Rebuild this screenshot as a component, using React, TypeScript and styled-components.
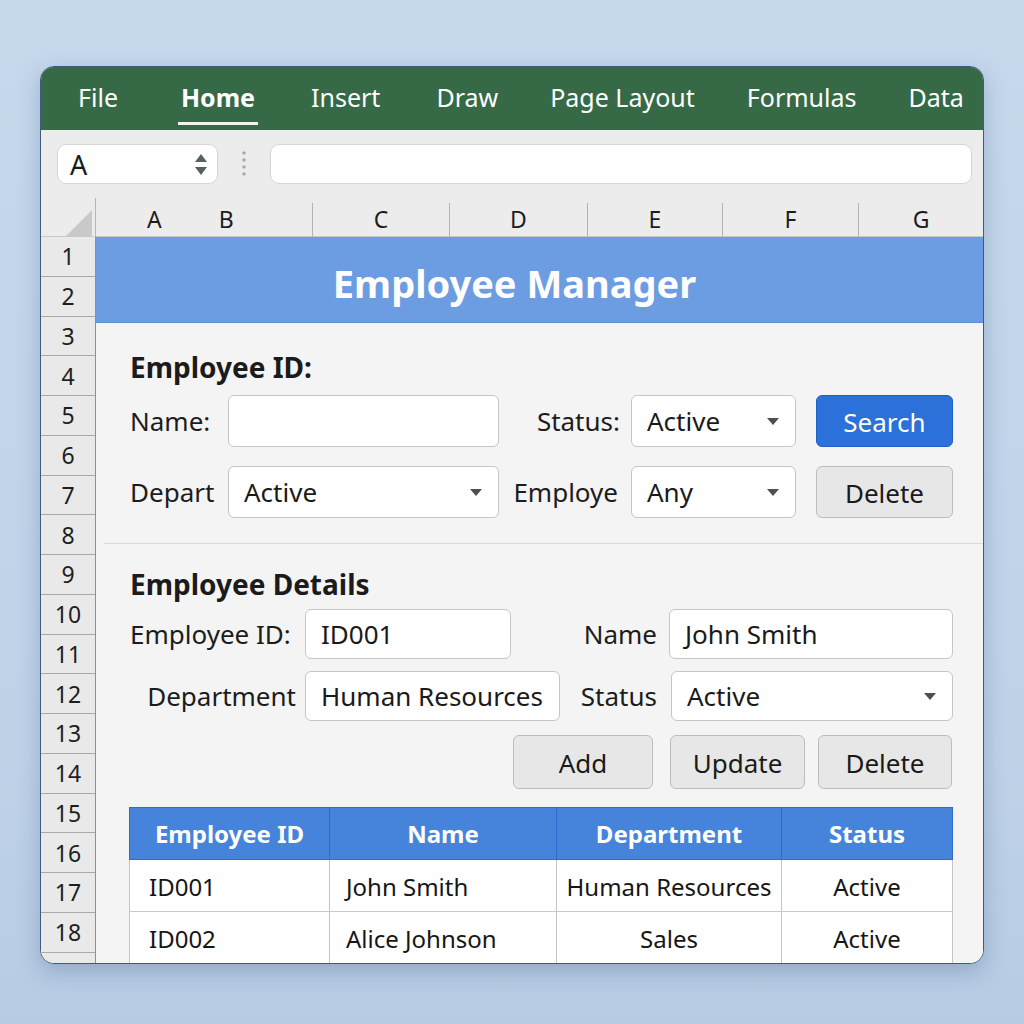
import styled, { createGlobalStyle } from "styled-components";

const GlobalStyle = createGlobalStyle`
  html, body {
    margin: 0;
    padding: 0;
  }
  body {
    font-family: "Noto Sans", "Open Sans", sans-serif;
    background: #c3d5e9;
  }
`;

const Page = styled.div`
  width: 1024px;
  height: 1024px;
  box-sizing: border-box;
  padding: 66px 40px 0 40px;
  background: linear-gradient(180deg, #c6d8ec 0%, #bfd2e8 70%, #b7cce3 100%);
`;

const Window = styled.div`
  width: 944px;
  height: 898px;
  box-sizing: border-box;
  border: 1px solid #3d5c7e;
  border-radius: 14px;
  overflow: hidden;
  display: flex;
  flex-direction: column;
  background: #f4f4f4;
  box-shadow: 0 8px 22px rgba(45, 80, 125, 0.28);
`;

const Ribbon = styled.div`
  height: 63px;
  flex-shrink: 0;
  background: #366a47;
  display: flex;
  align-items: stretch;
  padding-left: 37px;
`;

const Tab = styled.div<{ $active?: boolean; $ml: number }>`
  box-sizing: border-box;
  padding-top: 5px;
  margin-bottom: 5px;
  margin-left: ${(p) => p.$ml - (p.$active ? 3 : 0)}px;
  margin-right: ${(p) => (p.$active ? -3 : 0)}px;
  display: flex;
  align-items: center;
  color: #fff;
  font-size: 25px;
  font-weight: ${(p) => (p.$active ? 700 : 400)};
  border-bottom: 3px solid ${(p) => (p.$active ? "#f2f2f2" : "transparent")};
  padding-left: ${(p) => (p.$active ? "3px" : "0")};
  padding-right: ${(p) => (p.$active ? "3px" : "0")};
`;

const FormulaBar = styled.div`
  height: 68px;
  flex-shrink: 0;
  background: #ececec;
  display: flex;
  align-items: center;
  padding: 0 11px 0 16px;
`;

const NameBox = styled.div`
  width: 161px;
  height: 40px;
  box-sizing: border-box;
  background: #fff;
  border: 1px solid #d6d6d6;
  border-radius: 9px;
  display: flex;
  align-items: center;
  justify-content: space-between;
  padding: 0 10px 0 12px;
  font-size: 27px;
  color: #1a1a1a;
`;

const Spinner = styled.div`
  display: flex;
  flex-direction: column;
  gap: 5px;
`;

const Divider = styled.div`
  width: 52px;
  display: flex;
  justify-content: center;
`;

const FormulaInput = styled.div`
  flex: 1;
  height: 40px;
  box-sizing: border-box;
  background: #fff;
  border: 1px solid #d6d6d6;
  border-radius: 9px;
`;

const ColumnHeaders = styled.div`
  height: 38px;
  flex-shrink: 0;
  background: #ececec;
  display: grid;
  grid-template-columns: 55px 216px 137px 138px 135px 136px 1fr;
  border-bottom: 1px solid #c9c9c9;
`;

const CornerCell = styled.div`
  border-right: 1px solid #b5b5b5;
  display: flex;
  align-items: flex-end;
  justify-content: flex-end;
  padding: 0 3px 5px 0;
`;

const ColHead = styled.div<{ $first?: boolean }>`
  display: flex;
  align-items: center;
  justify-content: center;
  font-size: 23px;
  color: #1c1c1c;
  border-left: ${(p) => (p.$first ? "none" : "1px solid #b3b3b3")};
  margin-top: 5px;
  padding-bottom: 6px;
`;

const ABHead = styled(ColHead)`
  justify-content: flex-start;
  padding-left: 51px;
  gap: 57px;
`;

const Body = styled.div`
  flex: 1;
  display: flex;
  min-height: 0;
`;

const RowHeaders = styled.div`
  width: 55px;
  flex-shrink: 0;
  box-sizing: border-box;
  background: #e9e9e9;
  border-right: 1px solid #8f8f8f;
  display: flex;
  flex-direction: column;
`;

const RowNum = styled.div`
  height: 39.75px;
  flex-shrink: 0;
  box-sizing: border-box;
  border-bottom: 1px solid #a9a9a9;
  display: flex;
  align-items: center;
  justify-content: center;
  font-size: 23px;
  color: #1e1e1e;
`;

const Sheet = styled.div`
  flex: 1;
  display: flex;
  flex-direction: column;
  min-width: 0;
`;

const Banner = styled.div`
  height: 86px;
  flex-shrink: 0;
  box-sizing: border-box;
  background: #6c9de2;
  border-bottom: 1px solid #5c8ed6;
  display: flex;
  align-items: center;
  justify-content: center;
  color: #fff;
  font-size: 38px;
  font-weight: 700;
  padding: 6px 50px 0 0;
`;

const Panel = styled.div`
  flex: 1;
  background: #f4f4f4;
  padding: 28px 31px 0 34px;
  display: flex;
  flex-direction: column;
`;

const Heading = styled.div<{ $gap: number }>`
  font-size: 28px;
  font-weight: 700;
  line-height: 32px;
  color: #1b1b1b;
  margin-bottom: ${(p) => p.$gap}px;
`;

const Row = styled.div<{ $h: number; $gap?: number }>`
  display: flex;
  align-items: center;
  height: ${(p) => p.$h}px;
  margin-bottom: ${(p) => p.$gap ?? 0}px;
`;

const Label = styled.div<{ $w: number; $right?: boolean; $pr?: number }>`
  width: ${(p) => p.$w}px;
  flex-shrink: 0;
  box-sizing: border-box;
  text-align: ${(p) => (p.$right ? "right" : "left")};
  padding-right: ${(p) => p.$pr ?? 0}px;
  font-size: 26px;
  color: #1c1c1c;
  white-space: nowrap;
  overflow: hidden;
`;

const Field = styled.div<{ $w: number }>`
  width: ${(p) => p.$w}px;
  height: 100%;
  flex-shrink: 0;
  box-sizing: border-box;
  background: #fff;
  border: 1px solid #c6c6c6;
  border-radius: 6px;
  display: flex;
  align-items: center;
  justify-content: space-between;
  padding: 0 16px 0 15px;
  font-size: 26px;
  color: #1a1a1a;
  white-space: nowrap;
  overflow: hidden;
`;

const Button = styled.button<{ $w: number; $primary?: boolean; $ml?: number }>`
  width: ${(p) => p.$w}px;
  height: 100%;
  flex-shrink: 0;
  margin-left: ${(p) => p.$ml ?? 0}px;
  box-sizing: border-box;
  border-radius: 6px;
  font-family: "Noto Sans", "Open Sans", sans-serif;
  font-size: 26px;
  padding: 2px 0 0;
  background: ${(p) => (p.$primary ? "#2c70d9" : "#e7e7e7")};
  border: 1px solid ${(p) => (p.$primary ? "#1f5fc4" : "#bdbdbd")};
  color: ${(p) => (p.$primary ? "#fff" : "#1a1a1a")};
`;

const Rule = styled.div`
  height: 1px;
  background: #dadada;
  margin: 25px -31px 24px -26px;
`;

const ButtonRow = styled.div`
  height: 54px;
  display: flex;
  justify-content: flex-end;
  margin: 2px 0 18px;
`;

const Table = styled.div`
  width: 824px;
  margin-left: -1px;
  display: grid;
  grid-template-columns: 200px 227px 225px 172px;
`;

const Th = styled.div<{ $last?: boolean }>`
  height: 53px;
  box-sizing: border-box;
  background: #4684dc;
  border-top: 1px solid #2d6bd0;
  border-bottom: 1px solid #2d6bd0;
  border-left: 1px solid #2d6bd0;
  border-right: ${(p) => (p.$last ? "1px solid #2d6bd0" : "none")};
  display: flex;
  align-items: center;
  justify-content: center;
  color: #fff;
  font-size: 24px;
  font-weight: 700;
`;

const Td = styled.div<{ $left?: boolean; $pl?: number; $last?: boolean }>`
  height: 52px;
  box-sizing: border-box;
  background: #fff;
  border-left: 1px solid #c4c4c4;
  border-right: ${(p) => (p.$last ? "1px solid #c4c4c4" : "none")};
  border-bottom: 1px solid #c9c9c9;
  display: flex;
  align-items: center;
  justify-content: ${(p) => (p.$left ? "flex-start" : "center")};
  padding-left: ${(p) => p.$pl ?? 0}px;
  padding-top: 2px;
  font-size: 24px;
  color: #161616;
  white-space: nowrap;
`;

const Caret = () => (
  <svg width="12" height="7" viewBox="0 0 12 7">
    <path d="M0 0 L12 0 L6 7 Z" fill="#4b524d" />
  </svg>
);

const tabs: [string, number][] = [
  ["File", 0],
  ["Home", 63],
  ["Insert", 56],
  ["Draw", 56],
  ["Page Layout", 52],
  ["Formulas", 52],
  ["Data", 52],
];
const rows = Array.from({ length: 19 }, (_, i) => i + 1);

const tableRows = [
  ["ID001", "John Smith", "Human Resources", "Active"],
  ["ID002", "Alice Johnson", "Sales", "Active"],
];

export default function App() {
  return (
    <>
      <GlobalStyle />
      <Page>
        <Window>
          <Ribbon>
            {tabs.map(([t, ml]) => (
              <Tab key={t} $ml={ml} $active={t === "Home"}>
                {t}
              </Tab>
            ))}
          </Ribbon>

          <FormulaBar>
            <NameBox>
              <span>A</span>
              <Spinner>
                <svg width="12" height="8" viewBox="0 0 12 8">
                  <path d="M6 0 L12 8 L0 8 Z" fill="#55645a" />
                </svg>
                <svg width="12" height="8" viewBox="0 0 12 8">
                  <path d="M0 0 L12 0 L6 8 Z" fill="#55645a" />
                </svg>
              </Spinner>
            </NameBox>
            <Divider>
              <svg width="4" height="26" viewBox="0 0 4 26">
                {[2, 9, 16, 23].map((y) => (
                  <rect key={y} x="0.5" y={y - 1.5} width="3" height="3" rx="0.8" fill="#a7a7a7" />
                ))}
              </svg>
            </Divider>
            <FormulaInput />
          </FormulaBar>

          <ColumnHeaders>
            <CornerCell>
              <svg width="26" height="26" viewBox="0 0 26 26">
                <path d="M26 0 L26 26 L0 26 Z" fill="#c9c9c9" />
              </svg>
            </CornerCell>
            <ABHead $first>
              <span>A</span>
              <span>B</span>
            </ABHead>
            {["C", "D", "E", "F", "G"].map((c) => (
              <ColHead key={c}>{c}</ColHead>
            ))}
          </ColumnHeaders>

          <Body>
            <RowHeaders>
              {rows.map((r) => (
                <RowNum key={r}>{r < 19 ? r : ""}</RowNum>
              ))}
            </RowHeaders>

            <Sheet>
              <Banner>Employee Manager</Banner>
              <Panel>
                <Heading $gap={12}>Employee ID:</Heading>
                <Row $h={52} $gap={19}>
                  <Label $w={98}>Name:</Label>
                  <Field $w={271} />
                  <Label $w={132} $right $pr={11}>
                    Status:
                  </Label>
                  <Field $w={165}>
                    Active
                    <Caret />
                  </Field>
                  <Button $w={137} $ml={20} $primary>
                    Search
                  </Button>
                </Row>
                <Row $h={52}>
                  <Label $w={98}>Depart</Label>
                  <Field $w={271}>
                    Active
                    <Caret />
                  </Field>
                  <Label $w={132} $right $pr={13}>
                    Employe
                  </Label>
                  <Field $w={165}>
                    Any
                    <Caret />
                  </Field>
                  <Button $w={137} $ml={20}>
                    Delete
                  </Button>
                </Row>

                <Rule />

                <Heading $gap={9}>Employee Details</Heading>
                <Row $h={50} $gap={12}>
                  <Label $w={175}>Employee ID:</Label>
                  <Field $w={206}>ID001</Field>
                  <Label $w={158} $right $pr={12}>
                    Name
                  </Label>
                  <Field $w={284}>John Smith</Field>
                </Row>
                <Row $h={50} $gap={12}>
                  <Label $w={175} $right $pr={9}>
                    Department
                  </Label>
                  <Field $w={255}>Human Resources</Field>
                  <Label $w={111} $right $pr={14}>
                    Status
                  </Label>
                  <Field $w={282}>
                    Active
                    <Caret />
                  </Field>
                </Row>
                <ButtonRow>
                  <Button $w={140}>Add</Button>
                  <Button $w={135} $ml={17}>
                    Update
                  </Button>
                  <Button $w={134} $ml={13}>
                    Delete
                  </Button>
                </ButtonRow>

                <Table>
                  {["Employee ID", "Name", "Department", "Status"].map((h, i) => (
                    <Th key={h} $last={i === 3}>
                      {h}
                    </Th>
                  ))}
                  {tableRows.map((r) =>
                    r.map((c, i) => (
                      <Td
                        key={r[0] + i}
                        $left={i < 2}
                        $pl={i === 0 ? 19 : i === 1 ? 16 : 0}
                        $last={i === 3}
                      >
                        {c}
                      </Td>
                    ))
                  )}
                </Table>
              </Panel>
            </Sheet>
          </Body>
        </Window>
      </Page>
    </>
  );
}
